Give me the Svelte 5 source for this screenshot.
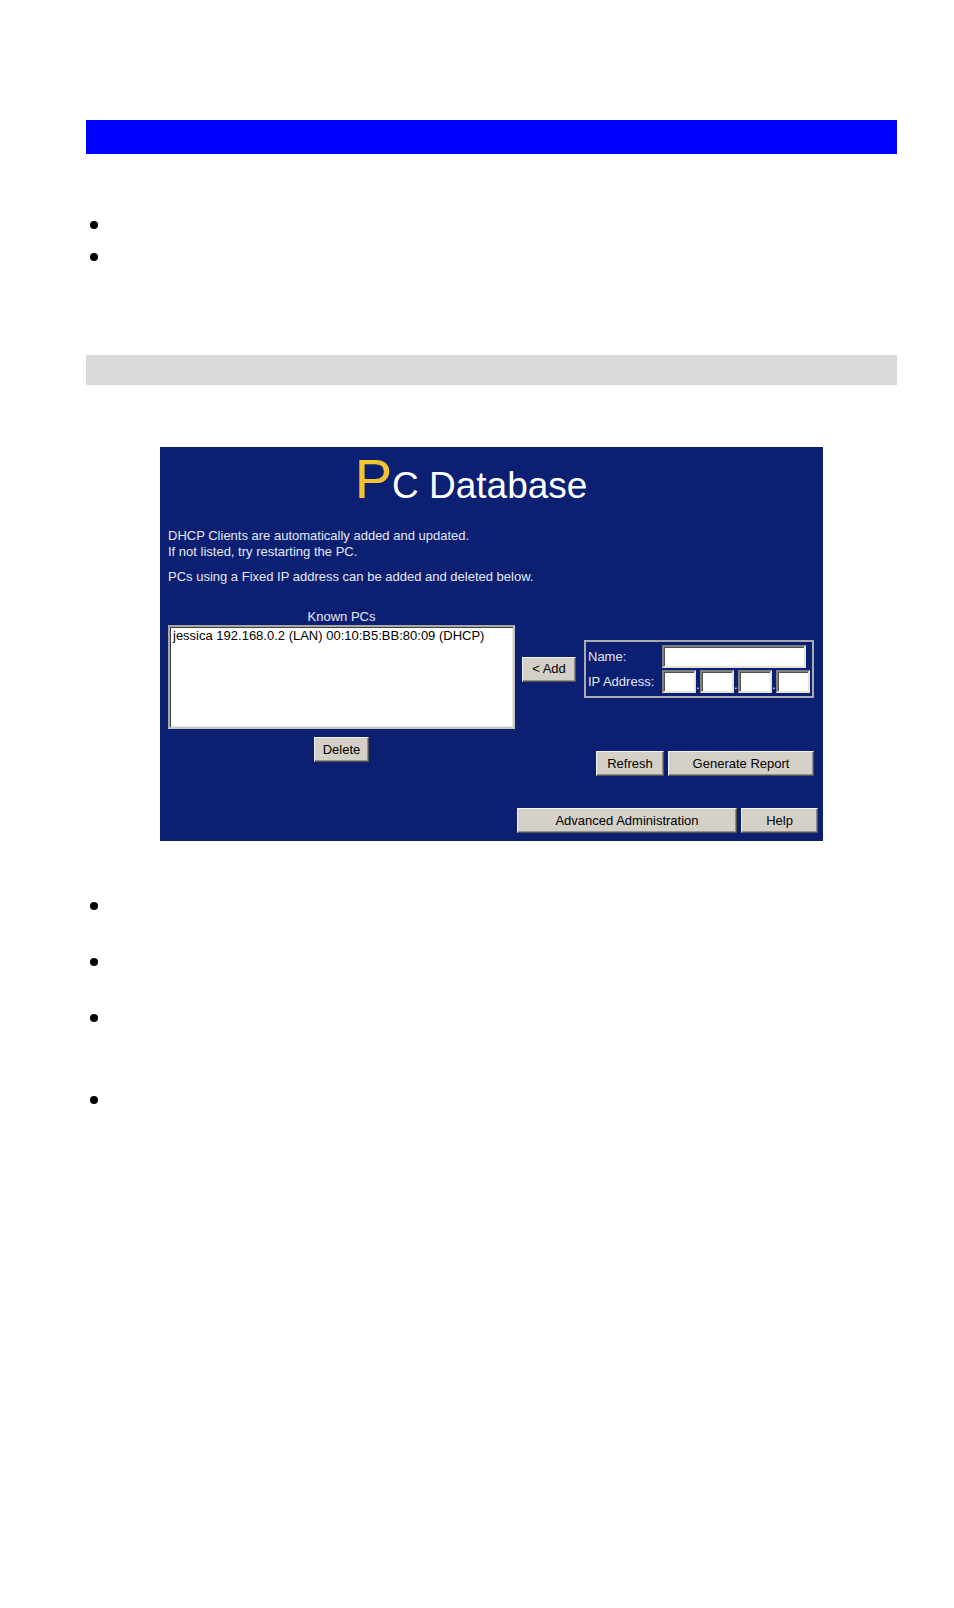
<script>
  let pcs = ['jessica 192.168.0.2 (LAN) 00:10:B5:BB:80:09 (DHCP)'];
  let name = '';
  let ip = ['', '', '', ''];
  let selected = '';

  const add = () => {
    if (name) pcs = [...pcs, `${name} ${ip.join('.')} (LAN)`];
  };
  const remove = () => {
    pcs = pcs.filter((pc) => pc !== selected);
  };
</script>

<main>
  <div class="bar chapter"></div>
  <ul class="intro">
    <li></li>
    <li></li>
  </ul>
  <div class="bar section"></div>

  <form class="panel" on:submit|preventDefault>
    <h1><span>P</span>C Database</h1>
    <p>DHCP Clients are automatically added and updated.<br />If not listed, try restarting the PC.</p>
    <p>PCs using a Fixed IP address can be added and deleted below.</p>

    <div class="database">
      <div class="known">
        <label for="known">Known PCs</label>
        <select id="known" size="6" bind:value={selected}>
          {#each pcs as pc}
            <option>{pc}</option>
          {/each}
        </select>
        <button type="button" on:click={remove}>Delete</button>
      </div>

      <div class="edit">
        <div class="entry">
          <button type="button" on:click={add}>&lt; Add</button>
          <div class="fields">
            <label for="name">Name:</label>
            <input id="name" type="text" bind:value={name} />
            <label for="ip0">IP Address:</label>
            <div class="ip">
              {#each ip as part, i}
                {#if i > 0}<span>.</span>{/if}
                <input id="ip{i}" type="text" maxlength="3" aria-label="IP Address {i + 1}" bind:value={part} />
              {/each}
            </div>
          </div>
        </div>
        <div class="actions">
          <button type="button" class="refresh">Refresh</button>
          <button type="button" class="report">Generate Report</button>
        </div>
      </div>
    </div>

    <div class="footer">
      <button type="button" class="admin">Advanced Administration</button>
      <button type="button" class="help">Help</button>
    </div>
  </form>

  <ul class="notes">
    <li></li>
    <li></li>
    <li class="long"></li>
    <li></li>
  </ul>
</main>

<style>
  :global(body) {
    margin: 0;
    background: #fff;
  }
  main {
    display: flow-root;
    padding: 120px 57px 0 86px;
    font: 13px/16px "Liberation Sans", Arial, sans-serif;
  }
  .bar {
    height: 34px;
    background: #00f;
  }
  .section {
    height: 30px;
    background: #d9d9d9;
  }
  ul {
    list-style: none;
    margin: 0;
    padding: 0;
  }
  .intro {
    margin: 55px 0 82px;
  }
  .notes {
    margin-top: 49px;
  }
  li {
    height: 32px;
    padding: 12px 4px;
    box-sizing: border-box;
  }
  li::before {
    content: "";
    display: block;
    width: 8px;
    height: 8px;
    border-radius: 50%;
    background: #000;
  }
  .notes li {
    height: 56px;
  }
  .notes .long {
    height: 82px;
  }
  .panel {
    max-width: 663px;
    margin: 62px auto 0;
    padding: 2px 5px 8px 8px;
    box-sizing: border-box;
    background: #0b2073;
    color: #e6e8f2;
  }
  h1 {
    margin: 0 0 12px;
    padding-right: 44px;
    font-size: 37px;
    font-weight: normal;
    line-height: 60px;
    text-align: center;
    color: #fff;
  }
  h1 span {
    font-size: 56px;
    color: #f4c430;
  }
  p {
    margin: 0 0 9px;
  }
  .database {
    display: flex;
    gap: 7px;
    margin-top: 24px;
    padding-right: 4px;
  }
  .known {
    flex: 1;
    display: flex;
    flex-direction: column;
    align-items: center;
  }
  select {
    width: 100%;
    height: 104px;
    margin-bottom: 8px;
    padding: 1px 0;
    overflow: hidden;
    border: 2px solid;
    border-color: #a8a8a8 #c8c6c0 #c8c6c0 #a8a8a8;
    border-radius: 0;
    box-shadow: inset 1px 1px #404040, inset -1px -1px #ece9e2;
    box-sizing: border-box;
    background: #fff;
    color: #000;
    font: inherit;
    outline: none;
  }
  option {
    min-height: 16px;
    padding: 0 3px;
  }
  .edit {
    padding-top: 31px;
  }
  .entry {
    display: flex;
    align-items: center;
    gap: 8px;
  }
  .fields {
    display: grid;
    grid-template-columns: 71px 148px;
    align-items: center;
    gap: 2px 3px;
    padding: 3px 2px;
    border: 2px solid #a9a9ae;
  }
  .ip {
    display: flex;
    align-items: flex-end;
  }
  .ip span {
    width: 4px;
  }
  input {
    width: 144px;
    height: 23px;
    padding: 0 2px;
    box-sizing: border-box;
    border: 2px solid;
    border-color: #808080 #e4e2dc #e4e2dc #808080;
    box-shadow: inset 1px 1px #505050;
    background: #fff;
    font: inherit;
  }
  .ip input {
    width: 34px;
  }
  button {
    height: 25px;
    padding: 0 8px;
    border: 1px solid;
    border-color: #f4f2ee #55534e #55534e #f4f2ee;
    border-radius: 0;
    box-shadow: inset -1px -1px #928f88;
    background: #d4d0c8;
    color: #000;
    font: inherit;
    white-space: nowrap;
  }
  .actions,
  .footer {
    display: flex;
    justify-content: flex-end;
    gap: 4px;
  }
  .actions {
    margin-top: 53px;
  }
  .footer {
    margin-top: 32px;
  }
  .entry button {
    width: 54px;
  }
  .refresh {
    width: 68px;
  }
  .report {
    width: 146px;
  }
  .admin {
    width: 220px;
  }
  .help {
    width: 77px;
  }
</style>
